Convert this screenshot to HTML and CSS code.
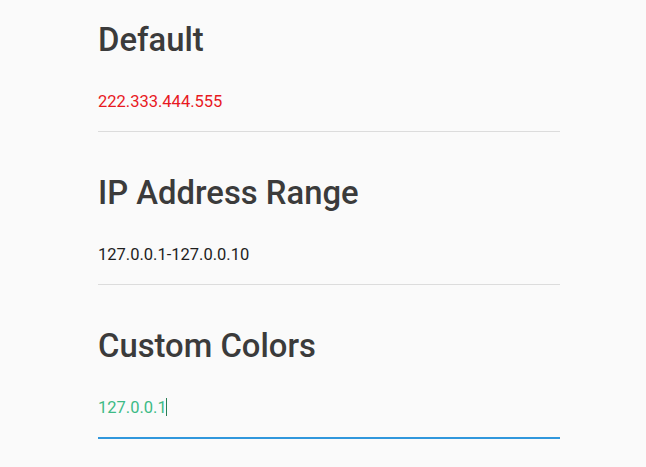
FILE: index.html
```html
<!DOCTYPE html>
<html lang="en">
<head>
<meta charset="utf-8">
<title>IP Input</title>
<link rel="stylesheet" href="styles.css">
</head>
<body>
<main class="container">
  <section class="field">
    <h2 class="field-title">Default</h2>
    <input class="ip-input ip-invalid" type="text" value="222.333.444.555">
  </section>
  <section class="field">
    <h2 class="field-title">IP Address Range</h2>
    <input class="ip-input" type="text" value="127.0.0.1-127.0.0.10">
  </section>
  <section class="field">
    <h2 class="field-title">Custom Colors</h2>
    <div class="input-wrap">
      <input class="ip-input ip-custom" type="text" value="127.0.0.1">
      <span class="caret"></span>
    </div>
  </section>
</main>
</body>
</html>
```
FILE: styles.css
```css
html, body {
  margin: 0;
  padding: 0;
  background: #fafafa;
}
body {
  font-family: Roboto, "Noto Sans", Arial, sans-serif;
  color: #3a3a3a;
}
.container {
  width: 462px;
  margin-left: 98px;
  padding-top: 21px;
}
.field {
  display: flex;
  flex-direction: column;
  margin-bottom: 42px;
}
.field-title {
  margin: 0 0 32px;
  font-size: 32.8px;
  line-height: 38px;
  font-weight: 500;
  color: #3b3b3b;
}
.input-wrap {
  position: relative;
}
.ip-input {
  box-sizing: content-box;
  display: block;
  height: 20px;
  padding: 0 0 20px;
  margin: 0;
  border: none;
  border-bottom: 1px solid #dcdcdc;
  background: transparent;
  font-family: Roboto, "Noto Sans", Arial, sans-serif;
  font-size: 16.5px;
  color: #1e1e1e;
  outline: none;
  width: 462px;
}
.ip-invalid {
  color: #e8191f;
}
.ip-custom {
  color: #3dba86;
  border-bottom: 2px solid #3097dc;
  padding-bottom: 20px;
}
.caret {
  position: absolute;
  left: 68px;
  top: 1px;
  width: 1px;
  height: 18px;
  background: #2a7f55;
}
```
